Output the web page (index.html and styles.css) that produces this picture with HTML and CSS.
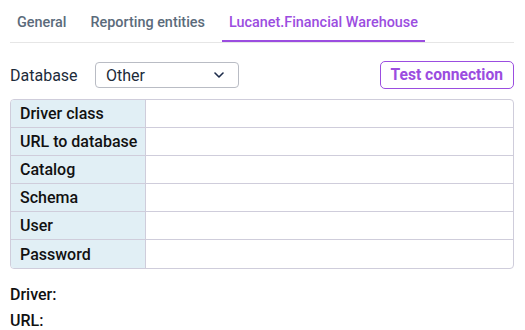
FILE: index.html
```html
<html>
	<head>
		<meta charset="utf-8" />
		<title>Database settings</title>
		<link rel="stylesheet" href="styles.css">
	</head>
	<body>
		<div class="wrapper">
			<ul class="tabs">
				<li>General</li>
				<li>Reporting entities</li>
				<li class="active">Lucanet.Financial Warehouse</li>
			</ul>
			<div class="dbRow">
				<span class="dbLabel">Database</span>
				<div class="select">
					<span>Other</span>
					<svg width="10" height="6" viewBox="0 0 10 6"><path d="M1 1 L5 5 L9 1" fill="none" stroke="#1c2b4a" stroke-width="1.6" stroke-linecap="round" stroke-linejoin="round"/></svg>
				</div>
				<div class="btnTest">Test connection</div>
			</div>
			<table class="props">
				<tr><th>Driver class</th><td></td></tr>
				<tr><th>URL to database</th><td></td></tr>
				<tr><th>Catalog</th><td></td></tr>
				<tr><th>Schema</th><td></td></tr>
				<tr><th>User</th><td></td></tr>
				<tr><th>Password</th><td></td></tr>
			</table>
			<div class="info">
				<p>Driver:</p>
				<p>URL:</p>
			</div>
		</div>
	</body>
</html>
```

FILE: styles.css
```css
	* {margin: 0; padding: 0; box-sizing: border-box;}
	body {font-family: Roboto, "Liberation Sans", sans-serif; color: #1a1a1a; background: #fff;}
/*wrapper*/
	.wrapper {padding: 0 11px 0 10px;}
/*tabs*/
	.tabs {display: flex; list-style: none; border-bottom: 1px solid #e6e6e6; padding-top: 12px;}
	.tabs li {font-size: 14.4px; font-weight: 500; color: #5b6b7b; padding: 0 7px; margin-right: 10px; height: 30px; line-height: 22px; border-bottom: 2px solid transparent;}
	.tabs li.active {color: #9b4de0; border-bottom-color: #9b4de0;}
/*database row*/
	.dbRow {display: flex; align-items: center; margin-top: 18px; height: 28px;}
	.dbLabel {font-size: 16px; color: #1c2b3a; width: 85px;}
	.select {width: 144px; height: 26px; border: 1px solid #b9bcc4; border-radius: 4px; display: flex; align-items: center; justify-content: space-between; padding: 0 14px 0 10px; font-size: 16px; color: #1c2b3a;}
	.btnTest {margin-left: auto; height: 28px; padding: 0 10px; border: 1px solid #9b4de0; border-radius: 5px; color: #9b4de0; font-size: 15.6px; font-weight: 700; line-height: 26px;}
/*table*/
	.props {width: 100%; margin-top: 10px; border-collapse: separate; border-spacing: 0; border: 1px solid #cfcddb; border-radius: 4px; overflow: hidden; table-layout: fixed;}
	.props th, .props td {height: 28px; border-bottom: 1px solid #cfcddb; font-size: 16px;}
	.props tr:last-child th, .props tr:last-child td {border-bottom: none;}
	.props th {width: 135px; background: #e1eff5; text-align: left; font-weight: 500; padding: 0 0 0 9px; white-space: nowrap; border-right: 1px solid #cfcddb; color: #111;}
/*info*/
	.info {margin-top: 13px;}
	.info p {font-size: 16px; font-weight: 500; line-height: 26px; color: #111;}
```
